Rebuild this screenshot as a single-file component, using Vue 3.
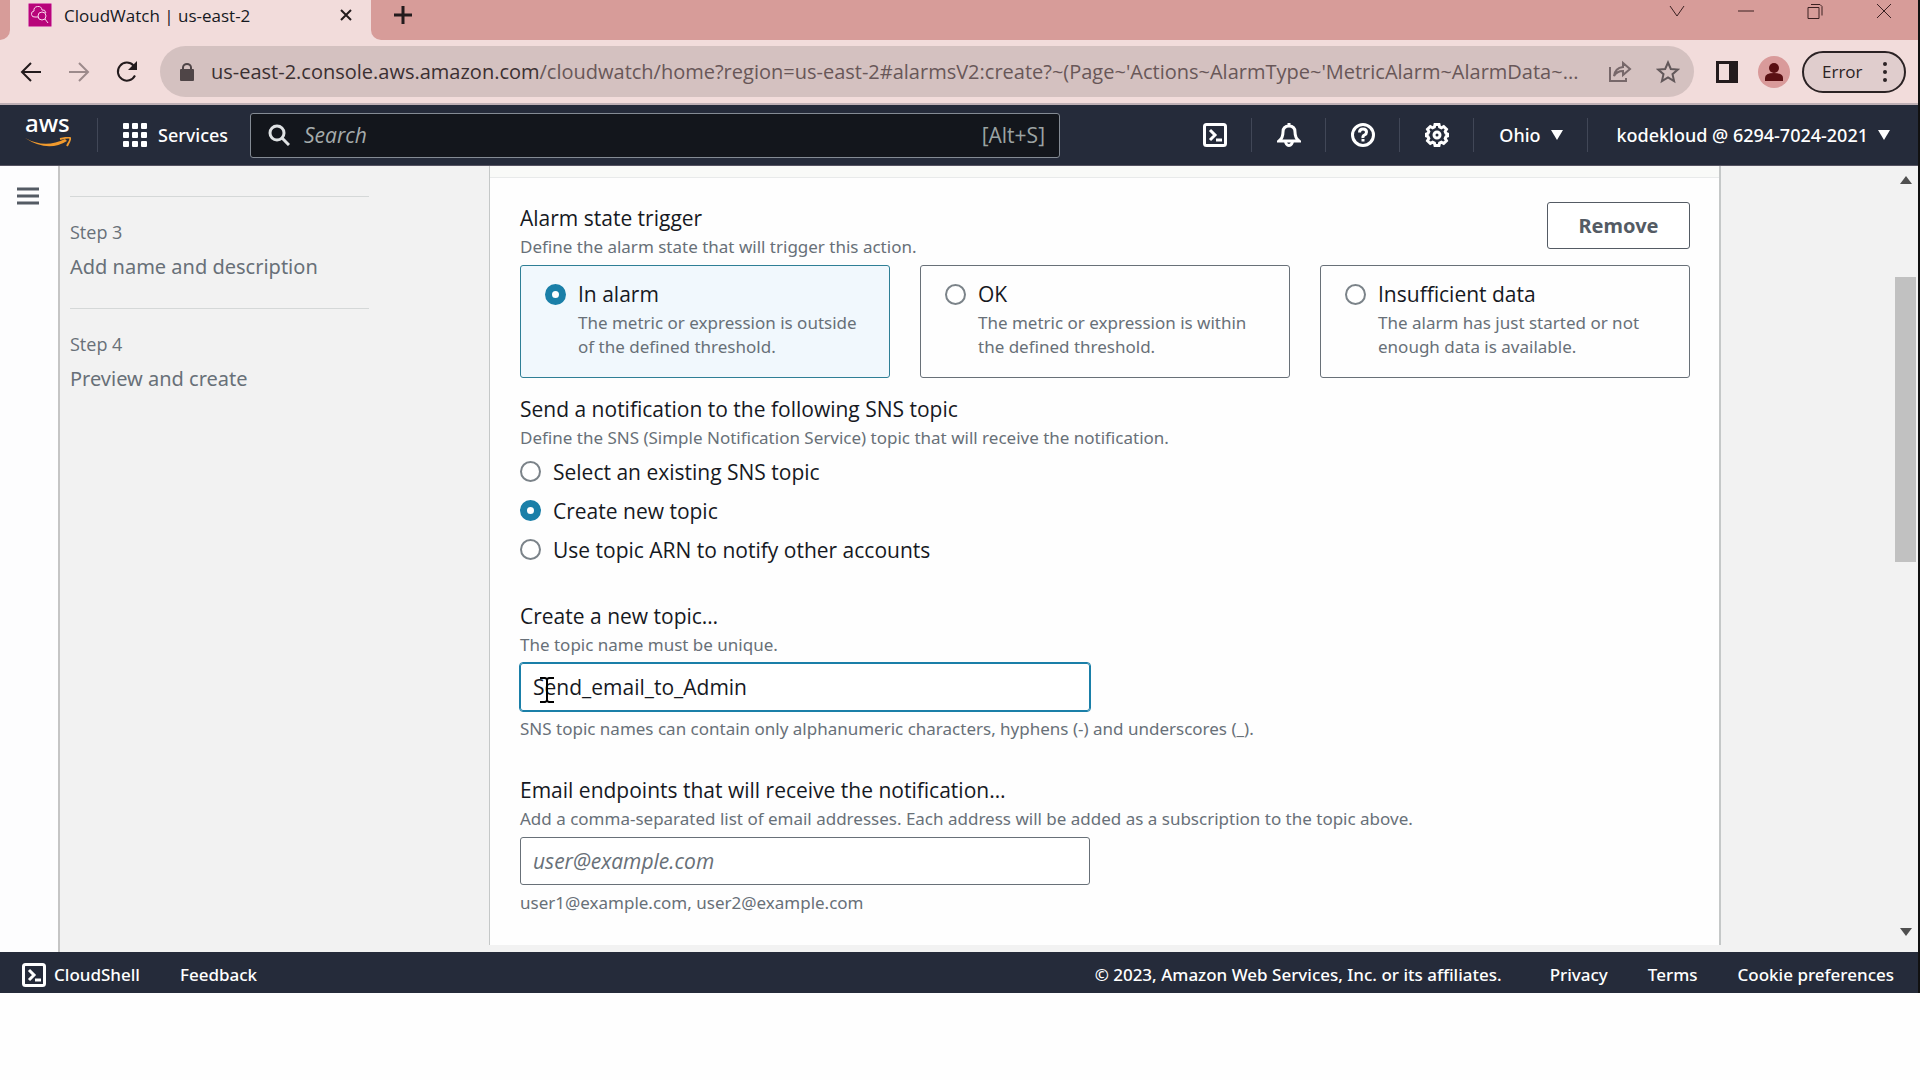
<template>
  <div class="window">
    <!-- tab strip -->
    <div class="tabstrip">
      <div class="prev-tab"></div>
      <div class="tab">
        <svg class="favicon" viewBox="0 0 24 24">
          <rect width="24" height="24" fill="#b8047a" />
          <path d="M10 14H7a3 3 0 0 1-1-6 4 4 0 0 1 8-1q3-1 4 3" />
          <circle cx="14" cy="13" r="4" />
          <path d="M17 16l3 4" />
        </svg>
        <span class="tab-title">CloudWatch | us-east-2</span>
        <button class="plain" aria-label="Close tab">
          <svg class="icon-close" viewBox="0 0 12 12"><path d="M1 1l10 10M11 1L1 11" /></svg>
        </button>
      </div>
      <button class="plain new-tab" aria-label="New tab">
        <svg class="icon-plus" viewBox="0 0 18 18"><path d="M9 0v18M0 9h18" /></svg>
      </button>
      <div class="window-buttons">
        <button v-for="item in windowButtons" :key="item.label" class="plain" :aria-label="item.label">
          <svg class="icon-window" viewBox="0 0 16 16"><path :d="item.path" /></svg>
        </button>
      </div>
    </div>

    <!-- address bar -->
    <div class="toolbar">
      <div class="history">
        <button class="plain" aria-label="Back">
          <svg class="icon-nav" viewBox="0 0 24 24"><path d="M22 12H3M12 3l-9 9 9 9" /></svg>
        </button>
        <button class="plain" aria-label="Forward">
          <svg class="icon-nav faded" viewBox="0 0 24 24"><path d="M2 12h19M12 3l9 9-9 9" /></svg>
        </button>
        <button class="plain" aria-label="Reload">
          <svg class="icon-nav" viewBox="0 0 24 24">
            <path d="M20 15.500A9 9 0 1 1 18.500 5.500L21 8" />
            <path class="solid" d="M22 1v9h-9z" />
          </svg>
        </button>
      </div>
      <div class="address">
        <svg class="icon-lock" viewBox="0 0 14 18">
          <rect x="0" y="6" width="14" height="12" rx="1" fill="#4f4547" />
          <path d="M3 7V4.500a4 3.500 0 0 1 8 0V7" fill="none" stroke="#4f4547" stroke-width="2" />
        </svg>
        <span class="url"><span class="host">us-east-2.console.aws.amazon.com</span>/cloudwatch/home?region=us-east-2#alarmsV2:create?~(Page~'Actions~AlarmType~'MetricAlarm~AlarmData~...</span>
        <button class="plain" aria-label="Share">
          <svg class="icon-share" viewBox="0 0 24 24">
            <path d="M2 7v14h16v-3M6 16q1-8 9-9V3l7 6-7 6v-4q-6 0-9 5z" />
          </svg>
        </button>
        <button class="plain" aria-label="Bookmark">
          <svg class="icon-star" viewBox="0 0 24 24">
            <path d="M12 2.500l2.800 6.500 7 .600-5.300 4.600 1.600 6.900L12 17.400l-6.100 3.700 1.600-6.900L2.200 9.600l7-.600z" />
          </svg>
        </button>
      </div>
      <div class="chrome-actions">
        <button class="plain" aria-label="Side panel">
          <svg class="icon-panel" viewBox="0 0 22 22">
            <rect x="1.500" y="1.500" width="19" height="19" fill="none" stroke="#231b1d" stroke-width="3" />
            <rect x="13" y="1" width="8" height="20" fill="#231b1d" />
          </svg>
        </button>
        <svg class="avatar" viewBox="0 0 32 32">
          <circle cx="16" cy="16" r="16" fill="#d99a9a" />
          <circle cx="16" cy="12" r="5" fill="#5a1013" />
          <path d="M7 25v-3q0-5 9-5t9 5v3z" fill="#5a1013" />
        </svg>
        <button class="error-button">
          Error
          <svg class="icon-dots" viewBox="0 0 6 20">
            <circle cx="3" cy="2" r="2" /><circle cx="3" cy="10" r="2" /><circle cx="3" cy="18" r="2" />
          </svg>
        </button>
      </div>
    </div>

    <!-- aws navigation -->
    <header class="nav">
      <a class="aws-logo" href="#">
        <span>aws</span>
        <svg viewBox="0 0 46 12">
          <path d="M0 1q20 11 40 1l2 2q-19 12-42-3z" fill="#f19a2d" />
          <path d="M35 2q9-2 10-1t-3 8" fill="none" stroke="#f19a2d" stroke-width="2" />
        </svg>
      </a>
      <span class="divider"></span>
      <button class="plain services">
        <svg class="icon-grid" viewBox="0 0 24 24">
          <template v-for="y in 3" :key="y">
            <rect v-for="x in 3" :key="x" :x="x * 9 - 9" :y="y * 9 - 9" width="6" height="6" rx="1" fill="#fff" />
          </template>
        </svg>
        Services
      </button>
      <label class="search">
        <svg class="icon-search" viewBox="0 0 22 22">
          <circle cx="9" cy="9" r="7" /><path d="M14 14l7 7" />
        </svg>
        <input type="text" placeholder="Search" aria-label="Search" />
        <span class="shortcut">[Alt+S]</span>
      </label>
      <div class="nav-right">
        <button class="plain nav-icon" aria-label="CloudShell">
          <svg class="icon-aws" viewBox="0 0 24 24">
            <rect x="1.500" y="1.500" width="21" height="21" rx="2" /><path d="M7 7l5 5-5 5M13 17h6" />
          </svg>
        </button>
        <button class="plain nav-icon" aria-label="Notifications">
          <svg class="icon-aws" viewBox="0 0 24 24">
            <path d="M12 0v3M2 18q4-3 4-9 0-6 6-6t6 6q0 6 4 9zM8.500 18a3.500 4.500 0 0 0 7 0" />
          </svg>
        </button>
        <button class="plain nav-icon" aria-label="Help">
          <svg class="icon-aws" viewBox="0 0 24 24">
            <circle cx="12" cy="12" r="10.500" />
            <path d="M8.500 9.500q0-3.500 3.500-3.500t3.500 3q0 2-2 3t-1.500 3M12 16v2.500" />
          </svg>
        </button>
        <button class="plain nav-icon" aria-label="Settings">
          <svg class="icon-aws" viewBox="0 0 24 24">
            <path d="M10 1.500h4l.600 2.500 1.800.800 2.300-1.300 2.800 2.800-1.300 2.300.800 1.800 1.500.600v2l-1.500.600-.800 1.800 1.300 2.300-2.800 2.800-2.300-1.300-1.800.800-.600 2.500h-4l-.600-2.500-1.800-.800-2.300 1.300-2.800-2.800 1.300-2.300-.800-1.800-1.500-.600v-2l1.500-.600.800-1.800-1.300-2.300 2.800-2.800 2.300 1.300 1.800-.800z" />
            <circle cx="12" cy="12" r="3" />
          </svg>
        </button>
        <button class="plain menu region">Ohio <span class="caret"></span></button>
        <button class="plain menu account">kodekloud @ 6294-7024-2021 <span class="caret"></span></button>
      </div>
    </header>

    <main class="page">
      <div class="rail">
        <button class="plain" aria-label="Open navigation">
          <svg class="icon-menu" viewBox="0 0 22 18"><path d="M0 2h22M0 9h22M0 16h22" /></svg>
        </button>
      </div>
      <nav class="steps">
        <div v-for="step in steps" :key="step.label" class="step">
          <div class="step-label">{{ step.label }}</div>
          <div class="step-name">{{ step.name }}</div>
        </div>
      </nav>

      <section class="card">
        <div class="card-head"></div>
        <form class="card-body" @submit.prevent>
          <div class="trigger-head">
            <div>
              <div class="title">Alarm state trigger</div>
              <div class="desc">Define the alarm state that will trigger this action.</div>
            </div>
            <button class="remove" type="button">Remove</button>
          </div>
          <div class="tiles">
            <label v-for="tile in tiles" :key="tile.value" class="tile" :class="{ active: state === tile.value }">
              <input v-model="state" type="radio" name="state" :value="tile.value" />
              <span>
                <span class="tile-name">{{ tile.value }}</span>
                <span class="tile-desc">{{ tile.desc }}</span>
              </span>
            </label>
          </div>

          <div class="group">
            <div class="title">Send a notification to the following SNS topic</div>
            <div class="desc">Define the SNS (Simple Notification Service) topic that will receive the notification.</div>
            <label v-for="item in topicOptions" :key="item" class="radio-row">
              <input v-model="topicOption" type="radio" name="topic" :value="item" />
              {{ item }}
            </label>
          </div>

          <div class="field">
            <label class="title" for="topic-name">Create a new topic…</label>
            <div class="desc">The topic name must be unique.</div>
            <div class="input-wrap">
              <input id="topic-name" v-model="topicName" class="text-input focused" type="text" />
              <svg class="pointer" viewBox="0 0 14 26">
                <path d="M0 1h5l2 1 2-1h5M7 2v22M0 25h5l2-1 2 1h5" />
              </svg>
            </div>
            <div class="desc">SNS topic names can contain only alphanumeric characters, hyphens (-) and underscores (_).</div>
          </div>

          <div class="field">
            <label class="title" for="emails">Email endpoints that will receive the notification…</label>
            <div class="desc">Add a comma-separated list of email addresses. Each address will be added as a subscription to the topic above.</div>
            <div class="input-wrap">
              <input id="emails" v-model="emails" class="text-input" type="text" placeholder="user@example.com" />
            </div>
            <div class="desc">user1@example.com, user2@example.com</div>
          </div>
        </form>
      </section>

      <div class="scrollbar">
        <span class="arrow up"></span>
        <span class="thumb"></span>
        <span class="arrow down"></span>
      </div>
    </main>

    <footer class="footer">
      <a href="#" class="shell-link">
        <svg class="icon-aws" viewBox="0 0 24 24">
          <rect x="1.500" y="1.500" width="21" height="21" rx="2" /><path d="M7 7l5 5-5 5M13 17h6" />
        </svg>
        CloudShell
      </a>
      <a href="#">Feedback</a>
      <span class="copyright">© 2023, Amazon Web Services, Inc. or its affiliates.</span>
      <a href="#">Privacy</a>
      <a href="#">Terms</a>
      <a href="#">Cookie preferences</a>
    </footer>
  </div>
</template>

<script setup>
import { ref } from 'vue';

const windowButtons = [
  { label: 'Search tabs', path: 'M1 3l7 10 7-10' },
  { label: 'Minimize', path: 'M0 8h16' },
  { label: 'Restore', path: 'M1 4.500h11v11H1zM4 1.500h9l2 2v9' },
  { label: 'Close', path: 'M1 1l14 14M15 1L1 15' },
];

const steps = [
  { label: 'Step 3', name: 'Add name and description' },
  { label: 'Step 4', name: 'Preview and create' },
];

const tiles = [
  { value: 'In alarm', desc: 'The metric or expression is outside of the defined threshold.' },
  { value: 'OK', desc: 'The metric or expression is within the defined threshold.' },
  { value: 'Insufficient data', desc: 'The alarm has just started or not enough data is available.' },
];

const topicOptions = ['Select an existing SNS topic', 'Create new topic', 'Use topic ARN to notify other accounts'];

const state = ref('In alarm');
const topicOption = ref('Create new topic');
const topicName = ref('Send_email_to_Admin');
const emails = ref('');
</script>

<style>
body {
  background: #fefefe;
}
</style>

<style scoped>
.window {
  border-right: 2px solid #111;
  font-family: "Noto Sans", sans-serif;
  font-size: 20px;
  color: #16191f;
}

.window * {
  box-sizing: border-box;
}

.window svg {
  display: block;
  flex: none;
}

.plain {
  display: flex;
  align-items: center;
  padding: 0;
  border: 0;
  background: none;
  font: inherit;
  color: inherit;
}

a {
  color: inherit;
  text-decoration: none;
}

/* browser chrome */
.tabstrip {
  display: flex;
  height: 40px;
  background: #f2dcdb;
  font-family: "Open Sans", sans-serif;
}

.prev-tab {
  width: 10px;
  background: #d79c99;
  border-bottom-right-radius: 10px;
}

.tab {
  display: flex;
  align-items: center;
  width: 361px;
  padding: 0 19px 10px 18px;
  font-size: 17px;
}

.favicon {
  width: 24px;
  height: 24px;
  margin-right: 12px;
  fill: none;
  stroke: #fbd7ee;
  stroke-width: 1;
}

.tab-title {
  flex: 1;
  white-space: nowrap;
}

.icon-close {
  width: 12px;
  height: 12px;
  stroke: #231b1d;
  stroke-width: 2;
}

.new-tab {
  width: 64px;
  padding: 0 0 10px 23px;
  background: #d79c99;
  border-bottom-left-radius: 10px;
}

.icon-plus {
  width: 18px;
  height: 18px;
  stroke: #231b1d;
  stroke-width: 3;
}

.window-buttons {
  flex: 1;
  display: flex;
  justify-content: flex-end;
  gap: 53px;
  padding: 0 26px 18px 0;
  background: #d79c99;
}

.icon-window {
  width: 16px;
  height: 16px;
  fill: none;
  stroke: #3a2021;
  stroke-width: 1;
}

.toolbar {
  display: flex;
  align-items: center;
  height: 65px;
  padding: 0 12px 0 19px;
  background: #f2dcdb;
  border-bottom: 2px solid #bfb0b5;
  font-family: "Open Sans", sans-serif;
}

.history {
  display: flex;
  gap: 24px;
  width: 141px;
}

.icon-nav {
  width: 24px;
  height: 24px;
  fill: none;
  stroke: #231b1d;
  stroke-width: 2;
}

.icon-nav .solid {
  fill: #231b1d;
  stroke: none;
}

.icon-nav.faded {
  stroke: #9c8a8b;
}

.address {
  flex: 1;
  min-width: 0;
  display: flex;
  align-items: center;
  height: 51px;
  padding: 0 14px 0 20px;
  border-radius: 26px;
  background: #d4c1c0;
}

.icon-lock {
  width: 14px;
  height: 18px;
}

.url {
  flex: 1;
  min-width: 0;
  padding-left: 17px;
  overflow: hidden;
  white-space: nowrap;
  color: #685758;
}

.host {
  color: #3b3032;
}

.icon-share {
  width: 24px;
  height: 24px;
  margin-right: 24px;
  fill: none;
  stroke: #77686a;
  stroke-width: 2;
}

.icon-star {
  width: 24px;
  height: 24px;
  fill: none;
  stroke: #62585a;
  stroke-width: 2;
}

.chrome-actions {
  display: flex;
  align-items: center;
  gap: 20px;
  padding-left: 22px;
}

.icon-panel {
  width: 22px;
  height: 22px;
}

.avatar {
  width: 32px;
  height: 32px;
}

.error-button {
  display: flex;
  align-items: center;
  justify-content: space-between;
  width: 104px;
  height: 42px;
  margin-left: -8px;
  padding: 0 16px 0 18px;
  border: 2px solid #2b2224;
  border-radius: 21px;
  background: #e0cdcd;
  font-family: inherit;
  font-size: 17px;
  color: #2b2224;
}

.icon-dots {
  width: 6px;
  height: 20px;
  fill: #2b2224;
}

/* aws bar */
.nav {
  display: flex;
  align-items: center;
  height: 61px;
  background: #252b3a;
  border-bottom: 1px solid #555361;
  font-size: 18px;
  font-weight: 500;
  color: #fff;
}

.aws-logo {
  width: 73px;
  padding-left: 25px;
  font-size: 24px;
  font-weight: 500;
  line-height: 24px;
  margin-top: -10px;
}

.aws-logo svg {
  width: 46px;
  height: 12px;
  margin-top: 2px;
}

.divider {
  width: 1px;
  height: 34px;
  margin-left: 24px;
  background: #414757;
}

.services {
  width: 152px;
  padding-left: 25px;
  gap: 11px;
}

.icon-grid {
  width: 24px;
  height: 24px;
}

.search {
  display: flex;
  align-items: center;
  width: 810px;
  height: 45px;
  padding: 0 14px 0 17px;
  border: 1px solid #848b94;
  border-radius: 3px;
  background: #13161c;
}

.icon-search {
  width: 22px;
  height: 22px;
  fill: none;
  stroke: #dfe2e4;
  stroke-width: 3;
}

.search input {
  flex: 1;
  min-width: 0;
  margin-left: 14px;
  padding: 0;
  border: 0;
  background: none;
  font: italic 400 21px "Open Sans", sans-serif;
  color: #fff;
}

.search input::placeholder {
  color: #a5abab;
}

.shortcut {
  font-family: "Open Sans", sans-serif;
  font-size: 21px;
  font-weight: 400;
  color: #9ba3a3;
}

.nav-right {
  flex: 1;
  display: flex;
  justify-content: flex-end;
}

.nav-icon,
.menu {
  height: 34px;
  border-right: 1px solid #414757;
}

.nav-icon {
  justify-content: center;
  width: 74px;
}

.icon-aws {
  width: 24px;
  height: 24px;
  fill: none;
  stroke: #fff;
  stroke-width: 3;
}

.menu {
  gap: 10px;
}

.region {
  justify-content: center;
  width: 114px;
}

.account {
  padding: 0 28px;
  border: 0;
}

.caret {
  border-top: 10px solid #fff;
  border-left: 6px solid transparent;
  border-right: 6px solid transparent;
}

/* console page */
.page {
  display: grid;
  grid-template-columns: 58px 431px 1fr 197px;
  padding-bottom: 7px;
  background: linear-gradient(to right, #fdfdfe 58px, #f2f2f2 58px);
}

.rail {
  padding: 21px 0 0 17px;
}

.icon-menu {
  width: 22px;
  height: 18px;
  stroke: #545b64;
  stroke-width: 3;
}

.steps {
  padding: 30px 120px 0 10px;
  margin-bottom: -7px;
  border-left: 2px solid #c5c5c5;
  color: #687078;
}

.step {
  height: 112px;
  padding-top: 21px;
  border-top: 1px solid #d5d8d8;
}

.step-label {
  font-family: "Open Sans", sans-serif;
  font-size: 18px;
  line-height: 28px;
}

.step-name {
  line-height: 30px;
  padding-top: 6px;
}

.card {
  border: 1px solid #c5c8c8;
  border-width: 0 2px 0 1px;
  background: #fefefe;
}

.card-head {
  height: 12px;
  background: #f9faf8;
  border-bottom: 1px solid #e8eaea;
}

.card-body {
  padding: 24px 29px 28px 30px;
  font-family: "Open Sans", sans-serif;
  font-size: 21px;
}

.trigger-head {
  display: flex;
  justify-content: space-between;
  align-items: flex-start;
  padding-top: 1px;
}

.title {
  display: block;
  line-height: 30px;
}

.desc,
.tile-desc {
  font-family: "Noto Sans", sans-serif;
  font-size: 17px;
  color: #687078;
}

.desc {
  line-height: 28px;
}

.remove {
  width: 143px;
  height: 47px;
  margin-top: -1px;
  border: 1px solid #545b64;
  border-radius: 3px;
  background: #fff;
  font: 700 20px "Noto Sans", sans-serif;
  color: #545b64;
}

.tiles {
  display: grid;
  grid-template-columns: repeat(3, 1fr);
  gap: 30px;
  margin-top: 4px;
}

.tile {
  display: flex;
  gap: 12px;
  height: 113px;
  padding: 13px 24px;
  border: 1px solid #687078;
  border-radius: 3px;
}

.tile.active {
  border-color: #2f7f96;
  background: #f1f8fd;
}

.tile input {
  margin-top: 5px;
}

.tile-name,
.tile-desc {
  display: block;
}

.tile-name {
  line-height: 30px;
}

.tile-desc {
  padding-top: 2px;
  line-height: 24px;
}

input[type="radio"] {
  appearance: none;
  flex: none;
  width: 21px;
  height: 21px;
  margin-left: 0;
  margin-right: 0;
  margin-bottom: 0;
  border: 2px solid #7b8389;
  border-radius: 50%;
  background: #fff;
}

input[type="radio"]:checked {
  border: 7px solid #1a7fa8;
}

.group {
  padding-top: 16px;
}

.radio-row {
  display: flex;
  align-items: center;
  gap: 12px;
  height: 39px;
}

.radio-row input {
  margin-top: 0;
}

.field {
  padding-top: 32px;
}

.input-wrap {
  position: relative;
  width: 570px;
  margin: 4px 0;
}

.text-input {
  display: block;
  width: 100%;
  height: 48px;
  padding: 0 12px;
  border: 1px solid #687078;
  border-radius: 3px;
  background: #fff;
  font: 21px "Open Sans", sans-serif;
  color: #16191f;
}

.text-input::placeholder {
  font-style: italic;
  color: #687078;
}

.text-input.focused {
  border-color: #1a7fa8;
  outline: 1px solid #1a7fa8;
}

/* text cursor of the mouse, over the field */
.pointer {
  position: absolute;
  left: 20px;
  top: 14px;
  width: 14px;
  height: 26px;
  fill: none;
  stroke: #000;
  stroke-width: 2;
}

.scrollbar {
  display: flex;
  flex-direction: column;
  align-items: center;
  justify-self: end;
  width: 26px;
  padding: 10px 2px 9px 3px;
}

.thumb {
  width: 21px;
  height: 285px;
  margin: 93px 0 auto;
  background: #c1c1c1;
}

.arrow {
  border-left: 6px solid transparent;
  border-right: 6px solid transparent;
}

.up {
  border-bottom: 8px solid #505050;
}

.down {
  border-top: 8px solid #505050;
}

.footer {
  display: flex;
  align-items: center;
  height: 41px;
  padding: 4px 24px 0 22px;
  background: #252b3a;
  font-size: 17px;
  font-weight: 500;
  color: #fff;
}

.footer a + a {
  margin-left: 40px;
}

.shell-link {
  display: flex;
  align-items: center;
  gap: 8px;
}

.copyright {
  margin: 0 48px 0 auto;
}
</style>
